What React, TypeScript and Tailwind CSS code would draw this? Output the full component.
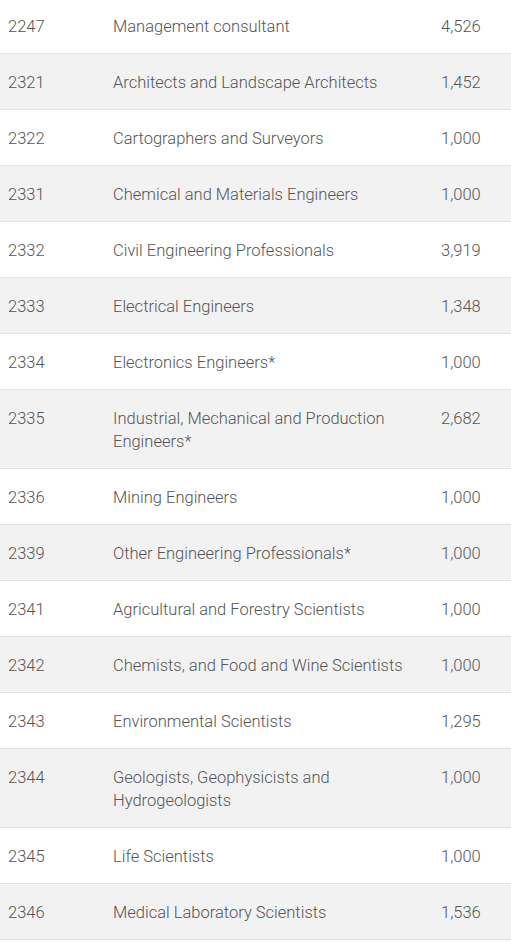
const rows: [string, string, string][] = [
  ["2247", "Management consultant", "4,526"],
  ["2321", "Architects and Landscape Architects", "1,452"],
  ["2322", "Cartographers and Surveyors", "1,000"],
  ["2331", "Chemical and Materials Engineers", "1,000"],
  ["2332", "Civil Engineering Professionals", "3,919"],
  ["2333", "Electrical Engineers", "1,348"],
  ["2334", "Electronics Engineers*", "1,000"],
  ["2335", "Industrial, Mechanical and Production Engineers*", "2,682"],
  ["2336", "Mining Engineers", "1,000"],
  ["2339", "Other Engineering Professionals*", "1,000"],
  ["2341", "Agricultural and Forestry Scientists", "1,000"],
  ["2342", "Chemists, and Food and Wine Scientists", "1,000"],
  ["2343", "Environmental Scientists", "1,295"],
  ["2344", "Geologists, Geophysicists and Hydrogeologists", "1,000"],
  ["2345", "Life Scientists", "1,000"],
  ["2346", "Medical Laboratory Scientists", "1,536"],
];

export default function App() {
  return (
    <div className="w-[511px] h-[943px] overflow-hidden bg-white">
      <table
        className="-mt-[2px] w-[511px] table-fixed border-collapse text-[16.5px] font-light leading-[23px] text-[#555555]"
        style={{ fontFamily: "Roboto, 'Liberation Sans', sans-serif" }}
      >
        <colgroup>
          <col className="w-[105px]" />
          <col className="w-[328px]" />
          <col className="w-[78px]" />
        </colgroup>
        <tbody>
          {rows.map(([code, title, count], i) => (
            <tr
              key={code}
              className={`border-b border-[#e2e2e2] ${i % 2 === 1 ? "bg-[#f2f2f2]" : "bg-white"}`}
            >
              <td className="px-2 pt-[17px] pb-[15px] align-top">{code}</td>
              <td className="px-2 pt-[17px] pb-[15px] align-top">{title}</td>
              <td className="px-2 pt-[17px] pb-[15px] align-top">{count}</td>
            </tr>
          ))}
        </tbody>
      </table>
    </div>
  );
}
